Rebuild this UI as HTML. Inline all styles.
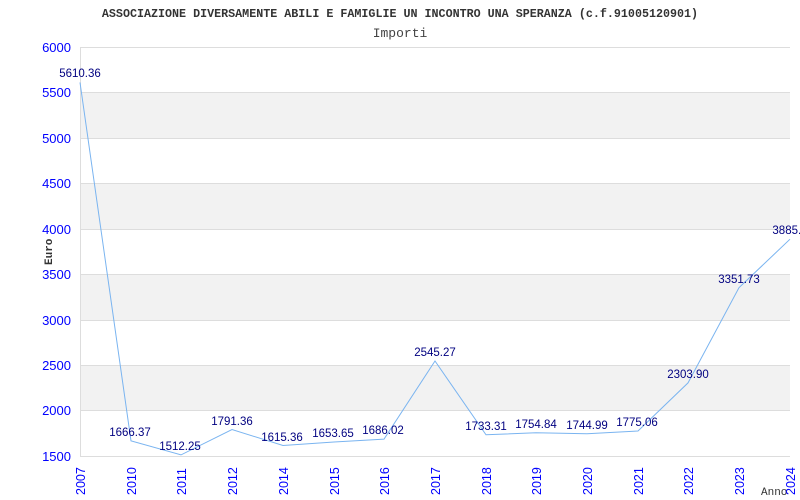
<!DOCTYPE html><html><head><style>body{margin:0;background:#fff}svg{display:block}</style></head><body>
<svg width="800" height="500" xmlns="http://www.w3.org/2000/svg">
<rect width="800" height="500" fill="#fff"/>
<text x="400" y="17" text-anchor="middle" font-family="Liberation Mono, monospace" font-weight="bold" font-size="11.7" fill="#333">ASSOCIAZIONE DIVERSAMENTE ABILI E FAMIGLIE UN INCONTRO UNA SPERANZA (c.f.91005120901)</text>
<text x="400" y="37" text-anchor="middle" font-family="Liberation Mono, monospace" font-size="13" fill="#444">Importi</text>
<g fill="#f2f2f2"><rect x="80" y="92" width="710" height="46"/><rect x="80" y="183" width="710" height="46"/><rect x="80" y="274" width="710" height="46"/><rect x="80" y="365" width="710" height="45"/></g>
<g stroke="#ddd" stroke-width="1"><line x1="80" y1="47.5" x2="790" y2="47.5"/><line x1="80" y1="92.5" x2="790" y2="92.5"/><line x1="80" y1="138.5" x2="790" y2="138.5"/><line x1="80" y1="183.5" x2="790" y2="183.5"/><line x1="80" y1="229.5" x2="790" y2="229.5"/><line x1="80" y1="274.5" x2="790" y2="274.5"/><line x1="80" y1="320.5" x2="790" y2="320.5"/><line x1="80" y1="365.5" x2="790" y2="365.5"/><line x1="80" y1="410.5" x2="790" y2="410.5"/><line x1="80" y1="456.5" x2="790" y2="456.5"/><line x1="80.5" y1="47" x2="80.5" y2="456"/></g>
<g font-family="Liberation Sans, sans-serif" font-size="13" fill="#00f" text-anchor="end">
<text x="71" y="52">6000</text><text x="71" y="97">5500</text><text x="71" y="143">5000</text><text x="71" y="188">4500</text><text x="71" y="234">4000</text><text x="71" y="279">3500</text><text x="71" y="325">3000</text><text x="71" y="370">2500</text><text x="71" y="415">2000</text><text x="71" y="461">1500</text></g>
<text transform="translate(52,265) rotate(-90)" font-family="Liberation Mono, monospace" font-weight="bold" font-size="11" fill="#333">Euro</text>
<text x="761" y="495" font-family="Liberation Mono, monospace" font-size="11" fill="#333">Anno</text>
<g font-family="Liberation Sans, sans-serif" font-size="12.5" fill="#00f">
<text transform="translate(85,495) rotate(-90)">2007</text><text transform="translate(136,495) rotate(-90)">2010</text><text transform="translate(186,495) rotate(-90)">2011</text><text transform="translate(237,495) rotate(-90)">2012</text><text transform="translate(288,495) rotate(-90)">2014</text><text transform="translate(339,495) rotate(-90)">2015</text><text transform="translate(389,495) rotate(-90)">2016</text><text transform="translate(440,495) rotate(-90)">2017</text><text transform="translate(491,495) rotate(-90)">2018</text><text transform="translate(541,495) rotate(-90)">2019</text><text transform="translate(592,495) rotate(-90)">2020</text><text transform="translate(643,495) rotate(-90)">2021</text><text transform="translate(693,495) rotate(-90)">2022</text><text transform="translate(744,495) rotate(-90)">2023</text><text transform="translate(795,495) rotate(-90)">2024</text></g>
<polyline fill="none" stroke="#7ab4f0" stroke-width="1" points="80,82.4 131,440.9 181,454.9 232,429.5 283,445.5 334,442 384,439.1 435,361 486,434.8 536,432.8 587,433.7 638,431 688,382.9 739,287.7 790,239.2"/>
<g font-family="Liberation Sans, sans-serif" font-size="11.5" fill="#000080" text-anchor="middle">
<text x="80" y="77">5610.36</text><text x="130" y="436">1666.37</text><text x="180" y="450">1512.25</text><text x="232" y="425">1791.36</text><text x="282" y="441">1615.36</text><text x="333" y="437">1653.65</text><text x="383" y="434">1686.02</text><text x="435" y="356">2545.27</text><text x="486" y="430">1733.31</text><text x="536" y="428">1754.84</text><text x="587" y="429">1744.99</text><text x="637" y="426">1775.06</text><text x="688" y="378">2303.90</text><text x="739" y="283">3351.73</text><text x="790" y="234">3885.4</text></g>
</svg></body></html>
